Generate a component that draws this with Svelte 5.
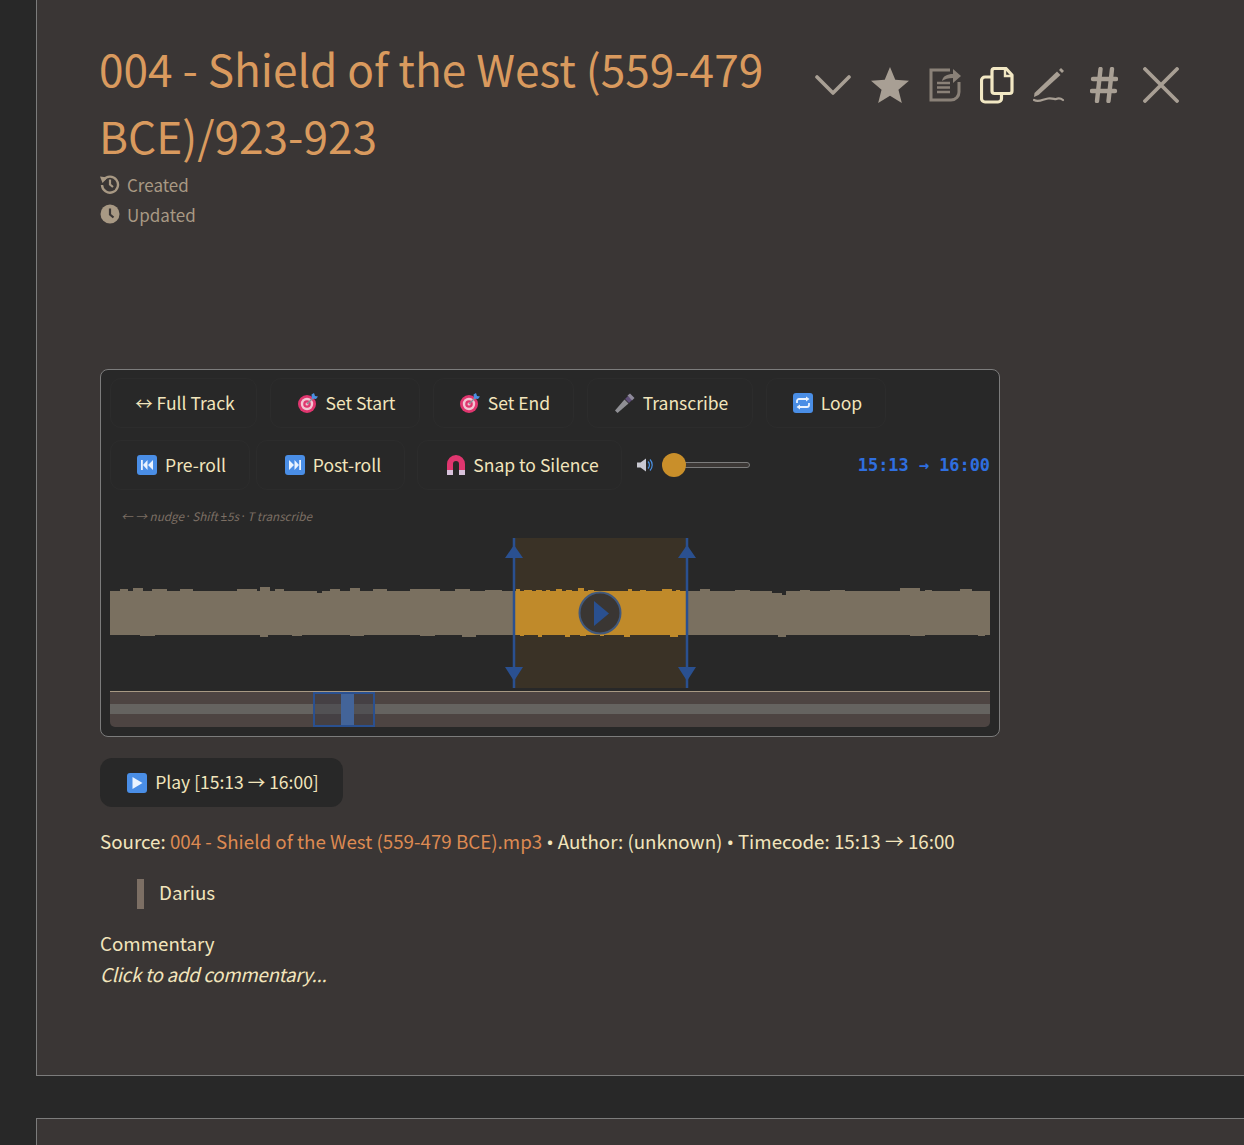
<script>
  const bumps = [
    [10, 18, 2], [23, 33, 3], [42, 57, 2], [70, 83, 2], [127, 147, 2], [150, 160, 4], [165, 174, 2],
    [207, 212, -2], [220, 230, 2], [240, 250, 3], [263, 277, 2], [300, 330, 2], [345, 360, 2],
    [375, 392, 1], [406, 410, 2], [414, 422, 1], [426, 432, 1], [436, 440, 1], [446, 452, 2], [456, 462, 1],
    [468, 474, 3], [478, 484, 1], [518, 522, 2], [530, 536, 1], [552, 562, 2], [566, 570, 1],
    [590, 600, 2], [625, 640, 1], [662, 674, -2], [672, 676, -4], [690, 700, 1], [720, 735, 1],
    [790, 810, 3], [815, 822, 1], [850, 862, 2]
  ];
  const lows = [
    [30, 45, 1], [150, 158, 2], [182, 192, 1], [240, 254, 1], [310, 325, 1], [352, 366, 2],
    [410, 414, 1], [428, 432, 2], [455, 460, 2], [470, 476, 1], [490, 494, 1], [514, 520, 2],
    [560, 568, 2], [668, 676, 2], [800, 815, 1], [868, 875, 1]
  ];
  let wave = 'M0 22H880V66H0Z';
  for (const [a, b, h] of bumps) {
    if (h > 0) wave += `M${a} ${22 - h}H${b}V22H${a}Z`;
  }
  for (const [a, b, h] of lows) wave += `M${a} 66H${b}V${66 + h}H${a}Z`;
  const cuts = bumps.filter((b) => b[2] < 0).map(([a, b, h]) => `M${a} 22H${b}V${22 - h}H${a}Z`).join('');
</script>

<div class="page">
  <section class="card">
    <header class="head">
      <h1>004 - Shield of the West (559-479 BCE)/923-923</h1>
      <div class="actions">
        <span class="cell c1"><svg width="36" height="20" viewBox="0 0 36 20"><path d="M2 2 18 18 34 2" fill="none" stroke="#a89f94" stroke-width="3.600" stroke-linecap="round" stroke-linejoin="round"/></svg></span>
        <span class="cell c2"><svg width="38" height="38" viewBox="0 0 36 36"><path d="M18 1l5 12 13 1-10 8.500 3.200 12.500L18 28.300 6.800 35 10 22.500 0 14l13-1z" fill="#a89f94"/></svg></span>
        <span class="cell c3"><svg width="32" height="34" viewBox="0 0 32 34"><path d="M21 2H2v30h20c5 0 8-4 8-8V14" fill="none" stroke="#8a8178" stroke-width="3"/><path d="M8 15h13M8 19.500h13M8 24h13" stroke="#8a8178" stroke-width="2.400"/><path d="M13 13c1-5 5-7 11-7V1l8 7-8 7v-5c-5 0-8 1-11 3z" fill="#8a8178"/></svg></span>
        <span class="cell c4"><svg width="34" height="37" viewBox="0 0 34 37"><path d="M12 8V4a2.500 2.500 0 0 1 2.500-2.500H26L32 8v16a2.500 2.500 0 0 1-2.500 2.500H14.500A2.500 2.500 0 0 1 12 24z" fill="none" stroke="#f2e8c4" stroke-width="3.200" stroke-linejoin="round"/><path d="M25 2v7h7" fill="none" stroke="#f2e8c4" stroke-width="2.400"/><path d="M12 10H5a3.500 3.500 0 0 0-3.500 3.500v18A3.500 3.500 0 0 0 5 35h13a3.500 3.500 0 0 0 3.500-3.500V27" fill="none" stroke="#f2e8c4" stroke-width="3.200"/></svg></span>
        <span class="cell c5"><svg width="32" height="36" viewBox="0 0 32 36"><path d="M1.500 26 24 4.500l3.500 3.500L5.500 28 1 30z" fill="#a89f94"/><path d="M26 3l2-2 3 3-2 2z" fill="#a89f94"/><path d="M1 33c5 3 9-1 14-1.500 5-.5 7 1 8 .5 2-1 4-1.500 7 1" fill="none" stroke="#a89f94" stroke-width="2.200" stroke-linecap="round"/></svg></span>
        <span class="cell c6"><svg width="28" height="36" viewBox="0 0 28 36"><path d="M10.500 2 7 34M22 2l-3.500 32M3 12h23M2 24h23" fill="none" stroke="#a89f94" stroke-width="4.400" stroke-linecap="round"/></svg></span>
        <span class="cell c7"><svg width="36" height="36" viewBox="0 0 36 36"><path d="M2 2l32 32M34 2 2 34" fill="none" stroke="#a89f94" stroke-width="3.800" stroke-linecap="round"/></svg></span>
      </div>
    </header>

    <div class="meta">
      <div class="meta-row"><svg width="20" height="20" viewBox="0 0 20 20"><path d="M3.500 6A8 8 0 1 1 2 11" fill="none" stroke="#a89984" stroke-width="2.400"/><path d="M0 2.500l7.500 1L2.500 9z" fill="#a89984"/><path d="M10 5.500V10.500l3 2.500" fill="none" stroke="#a89984" stroke-width="2.200"/></svg>Created</div>
      <div class="meta-row"><svg width="20" height="20" viewBox="0 0 20 20"><circle cx="10" cy="10" r="9.500" fill="#a89984"/><path d="M10 4.500V10.500l3.500 3" fill="none" stroke="#3a3635" stroke-width="2.200"/></svg>Updated</div>
    </div>

    <div class="player">
      <div class="row">
        <button class="b-full">↔ Full Track</button>
        <button class="b-start">
          <svg class="emo" width="20" height="20" viewBox="0 0 20 20"><circle cx="9" cy="11" r="9" fill="#e0366f"/><circle cx="9" cy="11" r="6.200" fill="#f2c4d2"/><circle cx="9" cy="11" r="3.800" fill="#e0366f"/><circle cx="9" cy="11" r="1.500" fill="#f2c4d2"/><path d="M9 11 16 4" stroke="#8a8f98" stroke-width="1.500"/><path d="M13.500 1.500 16 0l1 3 3 .5-2 2.500-4-.5z" fill="#4a90e2"/></svg>
          Set Start
        </button>
        <button class="b-end">
          <svg class="emo" width="20" height="20" viewBox="0 0 20 20"><circle cx="9" cy="11" r="9" fill="#e0366f"/><circle cx="9" cy="11" r="6.200" fill="#f2c4d2"/><circle cx="9" cy="11" r="3.800" fill="#e0366f"/><circle cx="9" cy="11" r="1.500" fill="#f2c4d2"/><path d="M9 11 16 4" stroke="#8a8f98" stroke-width="1.500"/><path d="M13.500 1.500 16 0l1 3 3 .5-2 2.500-4-.5z" fill="#4a90e2"/></svg>
          Set End
        </button>
        <button class="b-trans">
          <svg class="emo" width="20" height="20" viewBox="0 0 20 20"><path d="M0 17.500 9.500 6.500l4 4L2.500 20z" fill="#8f8f94"/><path d="M10 6l3-3 4 4-3 3z" fill="#5f4f78"/><path d="M12.500 2.500 15 .5 19.500 5 17 7.500z" fill="#8f8a9c"/></svg>
          Transcribe
        </button>
        <button class="b-loop">
          <svg class="emo" width="20" height="20" viewBox="0 0 20 20"><rect width="20" height="20" rx="3" fill="#4a8ee6"/><path d="M4 10V8a2 2 0 0 1 2-2h8M16 10v2a2 2 0 0 1-2 2H6" fill="none" stroke="#eaf3ff" stroke-width="1.800"/><path d="M13 3.500 16.500 6 13 8.500zM7 11.500 3.500 14 7 16.500z" fill="#eaf3ff"/></svg>
          Loop
        </button>
      </div>
      <div class="row row2">
        <button class="b-pre">
          <svg class="emo" width="20" height="20" viewBox="0 0 20 20"><rect width="20" height="20" rx="3" fill="#4a8ee6"/><path d="M4 5h1.800v10H4zM10.500 5v10L6 10zM16 5v10l-5-5z" fill="#eaf3ff"/></svg>
          Pre-roll
        </button>
        <button class="b-post">
          <svg class="emo" width="20" height="20" viewBox="0 0 20 20"><rect width="20" height="20" rx="3" fill="#4a8ee6"/><path d="M16 5h-1.800v10H16zM9.500 5v10L14 10zM4 5v10l5-5z" fill="#eaf3ff"/></svg>
          Post-roll
        </button>
        <button class="b-snap">
          <svg class="emo" width="18" height="20" viewBox="0 0 18 20"><path d="M0 15V9a9 9 0 0 1 18 0v6h-6V9a3 3 0 0 0-6 0v6z" fill="#e0366f"/><rect y="15" width="6" height="5" fill="#d9c3dc"/><rect x="12" y="15" width="6" height="5" fill="#d9c3dc"/></svg>
          Snap to Silence
        </button>
        <svg class="spk" width="16" height="14" viewBox="0 0 16 14"><path d="M0 4.500h3.500L9 .5v13L3.500 9.500H0z" fill="#c9c9d2"/><path d="M11 3.500a5 5 0 0 1 0 7M13 1.500a8 8 0 0 1 0 11" fill="none" stroke="#4a90e2" stroke-width="1.200"/></svg>
        <div class="slider"><span class="thumb"></span></div>
        <span class="time">15:13 → 16:00</span>
      </div>
      <div class="hint">← → nudge <span class="sym">·</span> Shift <span class="sym">±</span>5s <span class="sym">·</span> T transcribe</div>

      <div class="wave">
        <svg class="wave-svg" width="880" height="150" viewBox="0 0 880 150">
          <defs><clipPath id="reg"><rect x="404" y="0" width="173" height="150"/></clipPath></defs>
          <rect x="404" width="173" height="150" fill="#3a3226"/>
          <g class="soft" transform="translate(0 31)"><path d={wave} fill="#7a7060"/><path d={cuts} fill="#282828"/></g>
          <g clip-path="url(#reg)"><g class="soft" transform="translate(0 31)"><path d={wave} fill="#c08a2a"/></g></g>
          <path d="M404 0v150M577 0v150" stroke="#2a5090" stroke-width="2.500"/>
          <path d="M395 20 404 7l9 13zM568 20 577 7l9 13zM395 129l9 14 9-14zM568 129l9 14 9-14z" fill="#2a5090"/>
          <circle cx="490" cy="75" r="20.500" fill="#3a3633" stroke="#41597d" stroke-width="2"/>
          <path d="M484 63v25l15-12.500z" fill="#2a5090"/>
        </svg>
      </div>
      <div class="mini">
        <div class="band"></div>
        <div class="win"><span class="win-reg"></span></div>
      </div>
    </div>

    <button class="play">
      <svg class="emo" width="20" height="20" viewBox="0 0 20 20"><rect width="20" height="20" rx="3" fill="#4a8ee6"/><path d="M5.500 4v12l10-6z" fill="#eaf3ff"/></svg>
      Play [15:13 → 16:00]
    </button>

    <p class="src">Source: <a href="#x">004 - Shield of the West (559-479 BCE).mp3</a> <span class="sym">•</span> Author: (unknown) <span class="sym">•</span> Timecode: 15:13 → 16:00</p>
    <blockquote>Darius</blockquote>
    <p class="comm">Commentary</p>
    <p class="add"><em>Click to add commentary...</em></p>
  </section>
  <section class="card next"></section>
</div>

<style>
  :global(body) {
    margin: 0;
    background: #282828;
    overflow: hidden;
  }
  .page {
    height: 1145px;
    overflow: hidden;
    padding-left: 36px;
    font-family: "Noto Sans CJK SC", "Noto Sans", sans-serif;
    color: #f2e5bc;
    font-size: 18.750px;
  }
  .sym { font-family: "Noto Sans", sans-serif; }
  .card {
    box-sizing: border-box;
    height: 1076px;
    background: #3a3635;
    border: 1px solid #7c7c7c;
    border-top: 0;
    border-right: 0;
    padding: 35px 0 0 63px;
  }
  .next {
    height: 40px;
    margin-top: 42px;
    border-top: 1px solid #7c7c7c;
    padding: 0;
  }
  .head {
    display: flex;
    align-items: flex-start;
    width: 1088px;
  }
  h1 {
    width: 705px;
    margin: 0 0 0 -1px;
    flex: none;
    font-weight: 400;
    font-size: 44.200px;
    line-height: 67px;
    color: #d99a5e;
  }
  .actions {
    display: flex;
    margin-left: 1px;
    margin-top: 30px;
    height: 40px;
  }
  .cell {
    display: flex;
    align-items: center;
    justify-content: center;
    height: 40px;
  }
  .c1 { width: 56px; }
  .c2 { width: 58px; }
  .c3 { width: 52px; }
  .c4 { width: 52px; }
  .c5 { width: 51px; }
  .c6 { width: 59px; }
  .c7 { width: 55px; }
  .meta { margin-top: 0; }
  .meta-row {
    display: flex;
    align-items: center;
    gap: 7px;
    height: 30px;
    color: #a89984;
    font-size: 17px;
  }
  .player {
    box-sizing: border-box;
    width: 900px;
    height: 368px;
    margin-top: 140px;
    padding: 8px 9px;
    background: #282828;
    border: 1px solid #7c7c7c;
    border-radius: 8px;
  }
  .row {
    display: flex;
    align-items: center;
    gap: 13px;
    height: 50px;
  }
  .row2 {
    margin-top: 12px;
    gap: 6px;
  }
  button {
    box-sizing: border-box;
    display: flex;
    align-items: center;
    justify-content: center;
    gap: 8px;
    height: 50px;
    padding: 0 0 2px 3px;
    font: inherit;
    font-size: 17.500px;
    color: inherit;
    background: transparent;
    border: 1px solid #2c2c2c;
    border-radius: 11px;
  }
  .b-full { width: 147px; }
  .b-start { width: 150px; }
  .b-end { width: 141px; }
  .b-trans { width: 166px; }
  .b-loop { width: 120px; }
  .b-pre { width: 140px; }
  .b-post { width: 149px; padding-left: 5px; }
  .b-snap { width: 205px; margin-left: 6px; padding-left: 7px; }
  .spk { margin-left: 9px; }
  .emo { flex: none; margin-top: 2px; }
  .soft { filter: blur(0.4px); }
  .slider {
    position: relative;
    box-sizing: border-box;
    width: 85px;
    height: 6px;
    margin-left: 6px;
    background: #3c3836;
    border: 1px solid #7c7c7c;
    border-radius: 3px;
  }
  .thumb {
    position: absolute;
    left: -4px;
    top: -10px;
    width: 24px;
    height: 24px;
    border-radius: 50%;
    background: #c98f2a;
  }
  .time {
    margin-left: auto;
    font-family: "DejaVu Sans Mono", monospace;
    font-weight: 700;
    font-size: 16.900px;
    color: #2f6fe0;
    white-space: nowrap;
  }
  .hint {
    margin: 16px 0 0 11px;
    height: 32px;
    line-height: 20px;
    font-size: 11.700px;
    font-style: italic;
    color: #7c6f64;
  }
  .wave {
    height: 150px;
  }
  .wave-svg { display: block; }
  .mini {
    position: relative;
    box-sizing: border-box;
    height: 36px;
    margin-top: 3px;
    background: #4d4442;
    border-top: 1px solid #a89984;
    border-radius: 0 0 5px 5px;
  }
  .band {
    position: absolute;
    left: 0;
    right: 0;
    top: 12px;
    height: 10px;
    background: #656360;
  }
  .win {
    position: absolute;
    box-sizing: border-box;
    left: 203px;
    top: 0;
    width: 62px;
    height: 35px;
    background: rgba(60, 60, 70, 0.45);
    border: 2px solid #2a5090;
  }
  .win-reg {
    position: absolute;
    left: 26px;
    top: 0;
    width: 13px;
    height: 100%;
    background: #436499;
  }
  .play {
    width: 243px;
    height: 49px;
    margin-top: 21px;
    padding: 0 0 2px 3px;
    background: #282828;
    border: 0;
    border-radius: 12px;
  }
  p { margin: 0; }
  .src {
    margin-top: 20px;
    line-height: 27px;
    white-space: nowrap;
  }
  .src a {
    color: #dd8a52;
    text-decoration: none;
  }
  blockquote {
    box-sizing: border-box;
    margin: 24px 0 0 37px;
    padding-left: 15px;
    height: 30px;
    line-height: 26px;
    border-left: 7px solid #7c6f64;
  }
  .comm {
    margin-top: 20px;
    line-height: 27px;
  }
  .add {
    margin-top: 4px;
    line-height: 27px;
    letter-spacing: -0.280px;
  }
</style>
